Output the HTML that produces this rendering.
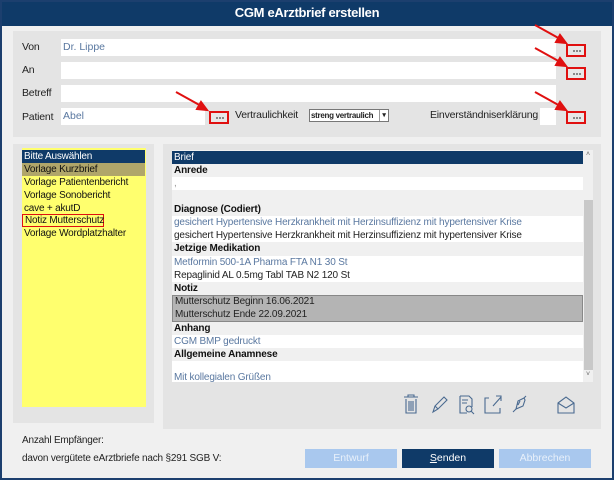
<!DOCTYPE html>
<html><head><meta charset="utf-8"><style>
*{box-sizing:border-box;margin:0;padding:0}
body{width:614px;height:480px;background:#f0f0f0;font-family:"Liberation Sans",sans-serif;font-size:10.5px;position:relative;overflow:hidden;color:#222;white-space:nowrap}
.frame{position:absolute;left:0;top:0;width:614px;height:480px;border:2px solid #1c3f6e}
.title{position:absolute;left:0;top:0;width:614px;height:26px;background:#0f3a68;color:#fff;font-weight:bold;font-size:13px;text-align:center;line-height:26px;letter-spacing:-0.3px}
.abs{position:absolute}
.panel{position:absolute;background:#e4e4e4}
.inp{position:absolute;background:#fff;height:17px;color:#5a78a0;line-height:17px;padding-left:2px}
.lbl{position:absolute;color:#222;letter-spacing:-0.2px}
.btn{position:absolute;width:20px;height:13px;border:2px solid #e01010;background:#e8e8e8}
.btn::after{content:"";position:absolute;left:5px;top:4px;width:1.5px;height:1.5px;background:#888;box-shadow:3px 0 #888,6px 0 #888}
.row{position:absolute;left:172px;width:411px;height:13.3px;line-height:13px;padding-left:2px;font-size:10px;letter-spacing:-0.15px}
.b{font-weight:bold;color:#111}
.w{background:#fff}
.blue{color:#5a78a0}
.yl{position:absolute;left:22px;width:123px;height:13px;line-height:13px;padding-left:2px;font-size:10px;color:#111;letter-spacing:-0.2px}
.fb{position:absolute;top:449px;height:19px;width:92px;text-align:center;line-height:19px;font-size:10.5px}
</style></head><body>
<div class="title">CGM eArztbrief erstellen</div>
<div class="panel" style="left:13px;top:31px;width:588px;height:106px"></div>
<div class="lbl" style="left:22px;top:41px">Von</div>
<div class="inp" style="left:61px;top:39px;width:495px">Dr. Lippe</div>
<div class="lbl" style="left:22px;top:64px">An</div>
<div class="inp" style="left:61px;top:62px;width:495px"></div>
<div class="lbl" style="left:22px;top:87px">Betreff</div>
<div class="inp" style="left:61px;top:85px;width:495px"></div>
<div class="lbl" style="left:22px;top:111px">Patient</div>
<div class="inp" style="left:61px;top:108px;width:144px">Abel</div>
<div class="lbl" style="left:235px;top:109px">Vertraulichkeit</div>
<div class="abs" style="left:309px;top:109px;width:80px;height:13px;background:#fff;border:1px solid #777;font-size:8px;font-weight:bold;line-height:11px;padding-left:1px;letter-spacing:-0.3px;overflow:hidden">streng vertraulich<span style="position:absolute;right:0;top:0;width:9px;height:11px;border-left:1px solid #999;font-size:7px;text-align:center;background:#fff">▾</span></div>
<div class="lbl" style="left:430px;top:109px">Einverständniserklärung</div>
<div class="inp" style="left:540px;top:108px;width:16px"></div>
<div class="btn" style="left:566px;top:44px"></div>
<div class="btn" style="left:566px;top:67px"></div>
<div class="btn" style="left:209px;top:111px"></div>
<div class="btn" style="left:566px;top:111px"></div>
<svg class="abs" style="left:0;top:0" width="614" height="140">
<g stroke="#e01010" stroke-width="2" fill="#e01010">
<line x1="535" y1="25" x2="562" y2="40"/><polygon points="566,43 556,42 560,35"/>
<line x1="535" y1="48" x2="562" y2="63"/><polygon points="566,66 556,65 560,58"/>
<line x1="176" y1="92" x2="203" y2="107"/><polygon points="207,110 197,109 201,102"/>
<line x1="535" y1="92" x2="562" y2="107"/><polygon points="566,110 556,109 560,102"/>
</g></svg>
<div class="panel" style="left:13px;top:144px;width:141px;height:279px"></div>
<div class="abs" style="left:22px;top:148px;width:124px;height:259px;background:#ffff6e"></div>
<div class="yl" style="top:150px;background:#0f3a68;color:#fff">Bitte Auswählen</div>
<div class="yl" style="top:163px;background:#b0a66a">Vorlage Kurzbrief</div>
<div class="yl" style="top:176px">Vorlage Patientenbericht</div>
<div class="yl" style="top:189px">Vorlage Sonobericht</div>
<div class="yl" style="top:202px">cave + akutD</div>
<div class="yl" style="top:214px;width:82px;border:1.5px solid #e01010;line-height:11px">Notiz Mutterschutz</div>
<div class="yl" style="top:227px">Vorlage Wordplatzhalter</div>
<div class="panel" style="left:163px;top:144px;width:438px;height:285px"></div>
<div class="abs" style="left:172px;top:150px;width:421px;height:232px;background:#f0f0f0"></div>
<div class="abs" style="left:584px;top:150px;width:9px;height:232px;background:#f0f0f0"></div>
<div class="abs" style="left:584px;top:200px;width:9px;height:170px;background:#c8c8c8"></div>
<div class="abs" style="left:586px;top:151px;font-size:7px;color:#666">˄</div>
<div class="abs" style="left:586px;top:371px;font-size:7px;color:#666">˅</div>
<div class="row" style="top:151px;background:#0f3a68;color:#fff">Brief</div>
<div class="row b" style="top:164px">Anrede</div>
<div class="row w" style="top:177px;color:#999">,</div>
<div class="row b" style="top:203px">Diagnose (Codiert)</div>
<div class="row w blue" style="top:216px">gesichert Hypertensive Herzkrankheit mit Herzinsuffizienz mit hypertensiver Krise</div>
<div class="row w" style="top:229px">gesichert Hypertensive Herzkrankheit mit Herzinsuffizienz mit hypertensiver Krise</div>
<div class="row b" style="top:242px">Jetzige Medikation</div>
<div class="row w blue" style="top:256px">Metformin 500-1A Pharma FTA N1 30 St</div>
<div class="row w" style="top:269px">Repaglinid AL 0.5mg Tabl TAB N2 120 St</div>
<div class="row b" style="top:282px">Notiz</div>
<div class="row" style="top:295px;height:27px;background:#b4b4b4;border:1px solid #888;line-height:12.5px">Mutterschutz Beginn 16.06.2021<br>Mutterschutz Ende 22.09.2021</div>
<div class="row b" style="top:322px">Anhang</div>
<div class="row w blue" style="top:335px">CGM BMP gedruckt</div>
<div class="row b" style="top:348px">Allgemeine Anamnese</div>
<div class="row w blue" style="top:361px;height:21px;line-height:34px;overflow:hidden">Mit kollegialen Grüßen</div>
<svg class="abs" style="left:395px;top:392px" width="190" height="24" fill="none" stroke="#4a6a90" stroke-width="1.1">
<path d="M9 5h14M13 5V3h6v2M11 7v14h10V7M14 9v10M16 9v10M18 9v10"/>
<path d="M38 20l2-6 9-9 3 3-9 9-5 3zM40 14l3 3"/>
<path d="M65 4h9l3 3v8M65 4v17h7M67 8h6M67 11h5"/><circle cx="74" cy="17" r="3"/><path d="M76 19l3 3"/>
<path d="M94 6h-4v15h15v-5M98 14l8-9M101 4h5v5"/>
<path d="M118 20l3-3M121 17l2-8 6-3 1 2-2 6-7 3zM125 9l-2 4M129 6l2-2"/>
<path d="M163 11l8-6 8 6v10h-16zM163 11l8 5 8-5"/>
</svg>
<div class="lbl" style="left:22px;top:435px;font-size:10px">Anzahl Empfänger:</div>
<div class="lbl" style="left:22px;top:453px;font-size:10px">davon vergütete eArztbriefe nach §291 SGB V:</div>
<div class="fb" style="left:305px;background:#a9c8ee;color:#e8f0fa">Entwurf</div>
<div class="fb" style="left:402px;background:#0f3a68;color:#fff"><u>S</u>enden</div>
<div class="fb" style="left:499px;background:#a9c8ee;color:#e8f0fa">Abbrechen</div>
<div class="frame"></div>
</body></html>
